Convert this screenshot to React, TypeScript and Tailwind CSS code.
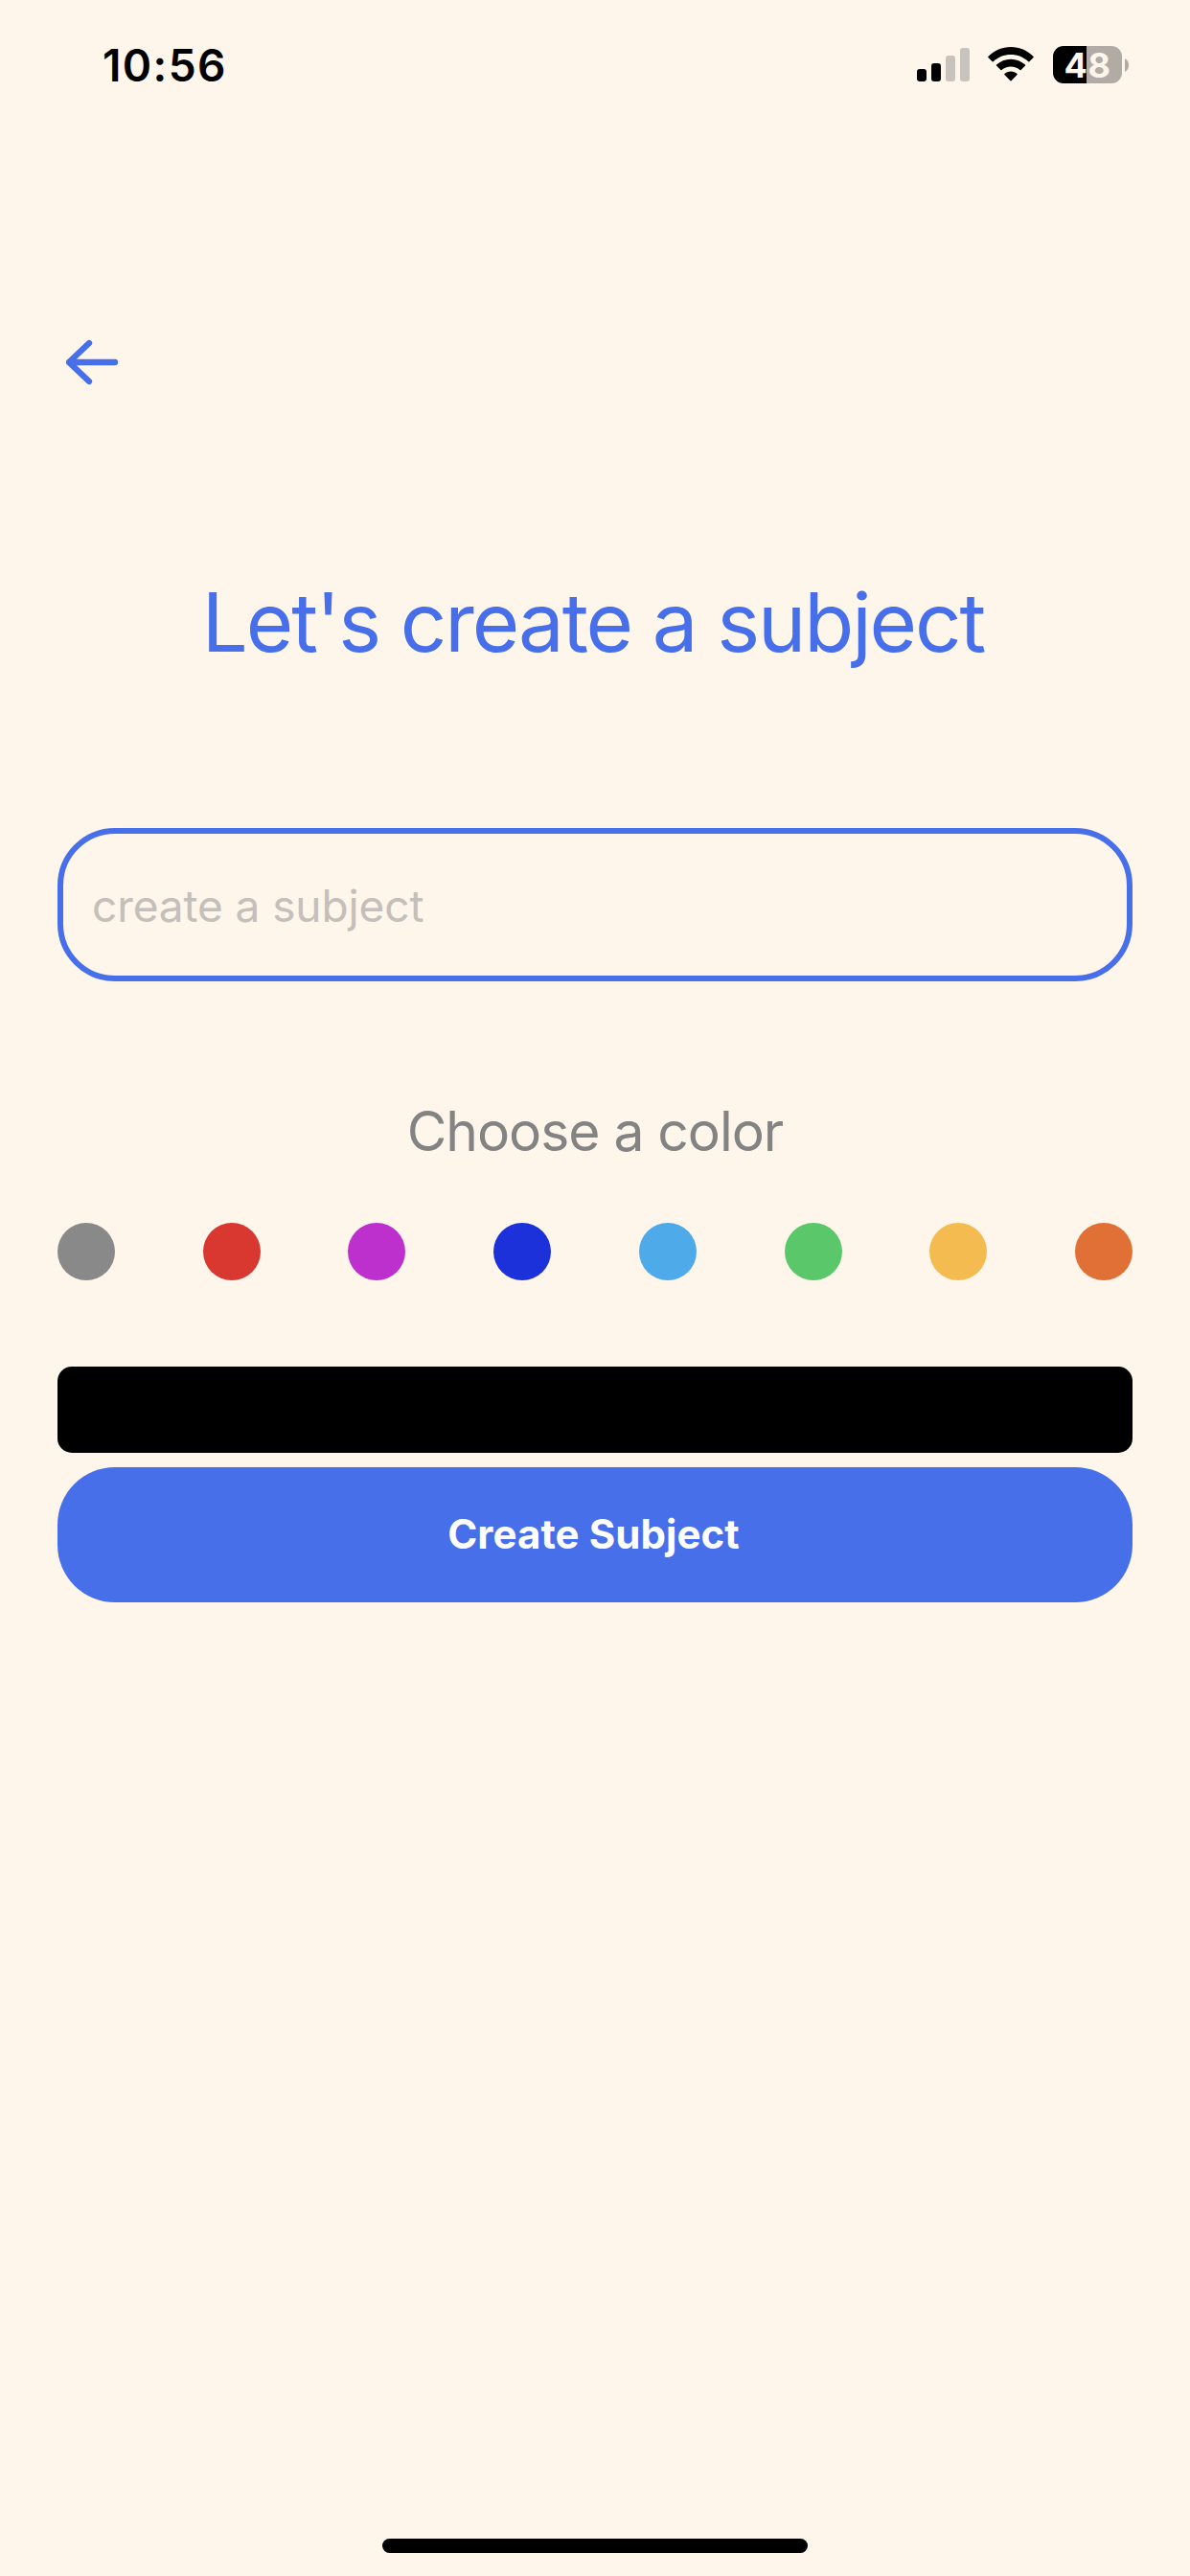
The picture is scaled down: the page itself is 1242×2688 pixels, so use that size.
import { useState } from "react";

const COLORS = [
  { name: "gray", bg: "bg-[#898989]" },
  { name: "red", bg: "bg-[#d93831]" },
  { name: "purple", bg: "bg-[#be30ce]" },
  { name: "blue", bg: "bg-[#1d31db]" },
  { name: "sky", bg: "bg-[#4eaae8]" },
  { name: "green", bg: "bg-[#5bc76b]" },
  { name: "yellow", bg: "bg-[#f4bc50]" },
  { name: "orange", bg: "bg-[#e17037]" },
];

function SignalIcon() {
  return (
    <svg width="55" height="35" viewBox="0 0 55 35" aria-hidden="true">
      <rect x="0" y="22" width="10" height="13" rx="3" />
      <rect x="15" y="16" width="10" height="19" rx="3" />
      <rect x="30" y="8" width="10" height="27" rx="3" fill="#c9c3bd" />
      <rect x="45" y="0" width="10" height="35" rx="3" fill="#c9c3bd" />
    </svg>
  );
}

function WifiIcon() {
  return (
    <svg width="48" height="36" viewBox="0 0 48 36" aria-hidden="true">
      <path d="M24 0C33 0 41.200 3.500 47.600 9.900C47.900 10.200 47.900 10.600 47.600 10.900L43.300 15.200C43 15.500 42.600 15.500 42.300 15.200C37.400 10.600 31 8 24 8S10.600 10.600 5.700 15.200C5.400 15.500 5 15.500 4.700 15.200L.4 10.900C.1 10.600 .1 10.200 .4 9.900C6.800 3.500 15 0 24 0Z" />
      <path d="M24 12.700C29.700 12.700 34.900 14.900 39 18.600C39.300 18.900 39.300 19.300 39 19.600L34.600 24C34.300 24.300 33.900 24.300 33.600 24C31 21.700 27.600 20.400 24 20.400S17 21.700 14.400 24C14.100 24.300 13.700 24.300 13.400 24L9 19.600C8.700 19.300 8.700 18.900 9 18.600C13.100 14.900 18.300 12.700 24 12.700Z" />
      <path d="M24 25.500C26.500 25.500 28.800 26.400 30.600 27.900C30.900 28.200 30.900 28.600 30.600 28.900L24.500 35.200C24.200 35.500 23.800 35.500 23.500 35.200L17.400 28.900C17.100 28.600 17.100 28.200 17.400 27.900C19.200 26.400 21.500 25.500 24 25.500Z" />
    </svg>
  );
}

function Battery() {
  return (
    <div className="flex items-center gap-[3px]">
      <div className="flex h-[39px] w-[72px] items-center justify-center rounded-[11px] bg-[linear-gradient(to_right,#000_35px,#b1aba5_35px)] text-[36px] leading-none font-bold tracking-[0.5px] text-[#fef5eb]">
        48
      </div>
      <svg width="4" height="14" viewBox="0 0 4 14" aria-hidden="true">
        <path d="M0 0C2.500 1.200 4 4 4 7S2.500 12.800 0 14Z" fill="#b1aba5" />
      </svg>
    </div>
  );
}

function StatusBar() {
  return (
    <header className="flex h-[135px] items-center justify-between pr-16 pl-[107px] text-black">
      <time className="pt-px text-[46px] leading-none font-semibold tracking-[1.4px]">10:56</time>
      <div className="flex items-center">
        <SignalIcon />
        <div className="mr-5 ml-[19px] pb-px">
          <WifiIcon />
        </div>
        <Battery />
      </div>
    </header>
  );
}

export default function App() {
  const [subject, setSubject] = useState("");
  return (
    <div className="flex h-[2688px] w-[1242px] flex-col bg-[#fef5eb] font-[Inter,sans-serif]">
      <StatusBar />
      <main className="flex flex-1 flex-col px-[60px]">
        <button type="button" aria-label="Back" className="mt-[217px] ml-[9px] h-[52px] w-[55px]">
          <svg width="55" height="52" viewBox="0 0 55 52" fill="none" stroke="#486fea" strokeWidth="6.300" strokeLinecap="round" strokeLinejoin="round">
            <path d="M24 6L3 26L24 46M3 26H51" />
          </svg>
        </button>
        <h1 className="mt-[195px] pr-[4px] text-center text-[85px] leading-[102px] tracking-[-2.1px] text-[#486fea]">
          Let's create a subject
        </h1>
        <input
          value={subject}
          onChange={(e) => setSubject(e.target.value)}
          placeholder="create a subject"
          className="mt-[163px] h-[160px] w-full rounded-[60px] border-[6px] border-[#486fea] bg-transparent px-[30px] pt-[2px] text-[46px] tracking-[-0.1px] outline-none placeholder:text-[#c4bfba]"
        />
        <h2 className="mt-[122px] text-center text-[57px] leading-[70px] tracking-[-1.06px] text-[#838383]">
          Choose a color
        </h2>
        <div className="mt-[60px] flex justify-between">
          {COLORS.map((c) => (
            <button key={c.name} type="button" aria-label={c.name} className={`size-[60px] rounded-full ${c.bg}`} />
          ))}
        </div>
        <div className="mt-[90px] h-[90px] rounded-[15px] bg-black" />
        <button
          type="button"
          className="mt-[15px] h-[141px] rounded-[60px] bg-[#486fea] pr-[3px] pb-[2px] text-[42px] font-bold tracking-[0.08px] text-white"
        >
          Create Subject
        </button>
      </main>
      <div className="mb-6 h-[15px] w-[444px] self-center rounded-full bg-black" />
    </div>
  );
}
